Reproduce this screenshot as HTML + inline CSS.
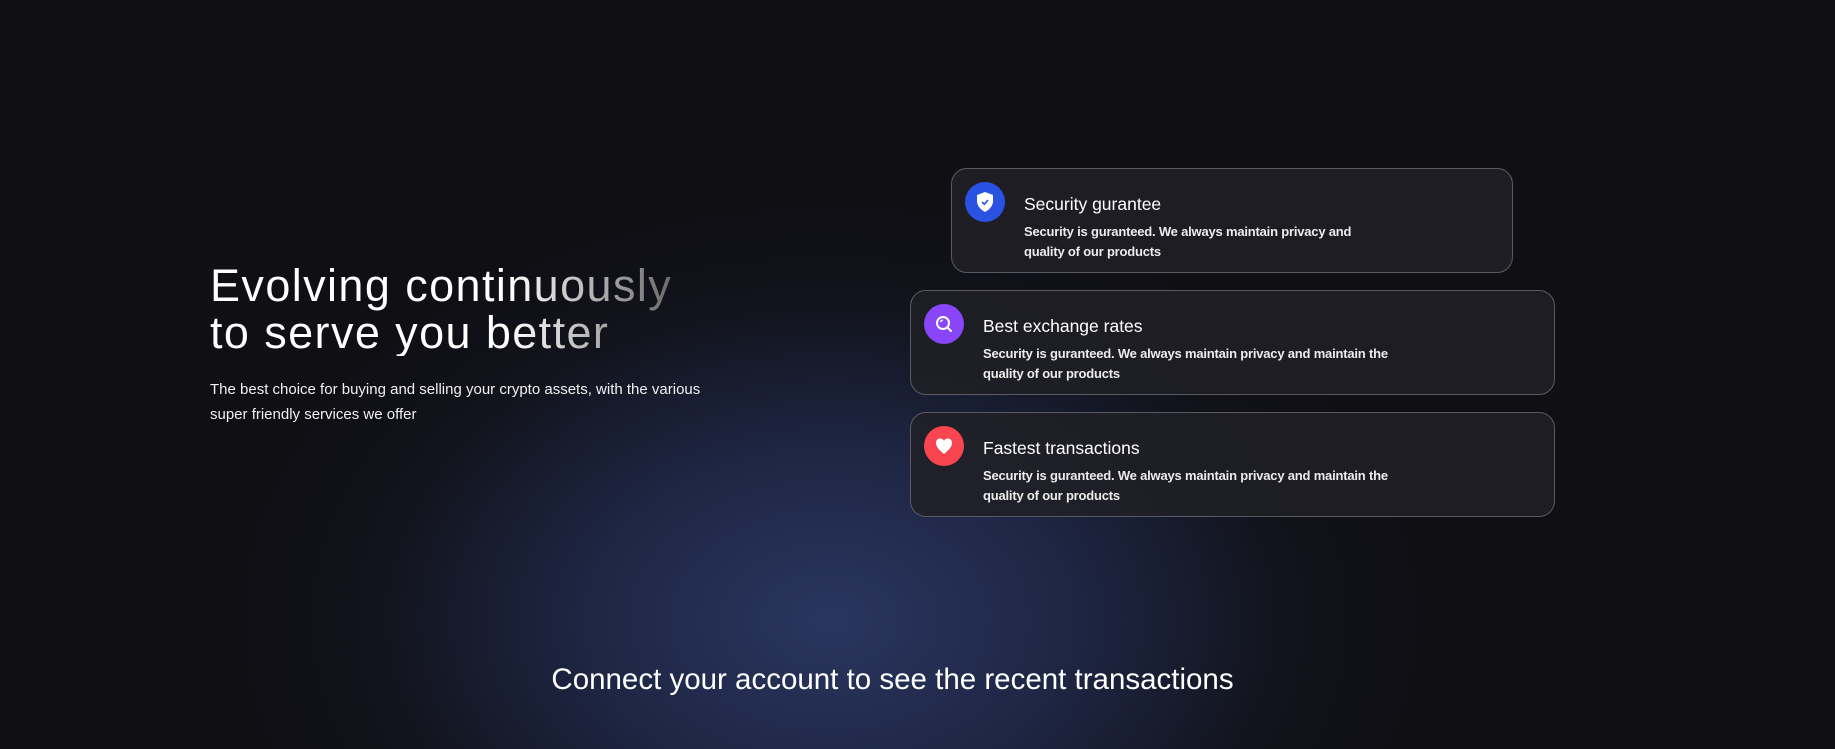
<!DOCTYPE html>
<html><head><meta charset="utf-8"><style>
*{margin:0;padding:0;box-sizing:border-box}
html,body{width:1835px;height:749px;overflow:hidden}
body{position:relative;font-family:"Liberation Sans",sans-serif;color:#fff;
background:#0f0f14;
background-image:radial-gradient(ellipse 600px 420px at 830px 620px,#2a3660 0%,#1e2644 40%,rgba(20,22,34,0.6) 75%,rgba(15,15,20,0) 100%);}
.h{position:absolute;left:210px;top:262px;font-size:45px;line-height:47px;font-weight:300;letter-spacing:1.4px;
background:linear-gradient(90deg,#fff 0%,#fff 65%,#6a6a6a 100%);-webkit-background-clip:text;background-clip:text;color:transparent}
.p{position:absolute;left:210px;top:377px;font-size:15px;line-height:25px;color:#f0f0f0;width:520px}
.card{position:absolute;border:1px solid #5a5a64;border-radius:16px;background:rgba(32,32,38,0.85)}
.ic{position:absolute;width:40px;height:40px;border-radius:50%;display:flex;align-items:center;justify-content:center}
.t{position:absolute;font-size:17.5px;color:#fff}
.d{position:absolute;font-size:13px;line-height:20px;font-weight:bold;color:#ececec;letter-spacing:-0.2px}
.b{position:absolute;left:0;width:1835px;text-align:center;top:663px;font-size:29.5px;color:#fff;padding-right:50px}
</style></head><body>
<div class="h">Evolving continuously<br>to serve you better</div>
<div class="p">The best choice for buying and selling your crypto assets, with the various super friendly services we offer</div>

<div class="card" style="left:951px;top:168px;width:562px;height:105px">
 <div class="ic" style="left:13px;top:13px;background:#2952e3">
  <svg width="20" height="22" viewBox="0 0 20 22"><path d="M10 1 L18 4 V10 C18 15 14 19 10 21 C6 19 2 15 2 10 V4 Z" fill="#fff"/><path d="M7 11 L9.3 13.2 L13 9" stroke="#2952e3" stroke-width="1.6" fill="none"/></svg>
 </div>
 <div class="t" style="left:72px;top:25px">Security gurantee</div>
 <div class="d" style="left:72px;top:53px">Security is guranteed. We always maintain privacy and<br>quality of our products</div>
</div>

<div class="card" style="left:910px;top:290px;width:645px;height:105px">
 <div class="ic" style="left:13px;top:13px;background:#8945f8">
  <svg width="20" height="20" viewBox="0 0 20 20"><circle cx="9" cy="9" r="6" stroke="#fff" stroke-width="2" fill="none"/><path d="M13.5 13.5 L17 17" stroke="#fff" stroke-width="2" stroke-linecap="round"/><path d="M6.5 8 A3 3 0 0 1 9 6" stroke="#fff" stroke-width="1.3" fill="none"/></svg>
 </div>
 <div class="t" style="left:72px;top:25px">Best exchange rates</div>
 <div class="d" style="left:72px;top:53px">Security is guranteed. We always maintain privacy and maintain the<br>quality of our products</div>
</div>

<div class="card" style="left:910px;top:412px;width:645px;height:105px">
 <div class="ic" style="left:13px;top:13px;background:#f84550">
  <svg width="20" height="20" viewBox="0 0 20 20"><path d="M10 18 C4 13 2 10 2 7 C2 4 4 2.5 6.3 2.5 C8 2.5 9.2 3.5 10 4.8 C10.8 3.5 12 2.5 13.7 2.5 C16 2.5 18 4 18 7 C18 10 16 13 10 18 Z" fill="#fff"/></svg>
 </div>
 <div class="t" style="left:72px;top:25px">Fastest transactions</div>
 <div class="d" style="left:72px;top:53px">Security is guranteed. We always maintain privacy and maintain the<br>quality of our products</div>
</div>

<div class="b">Connect your account to see the recent transactions</div>
</body></html>
